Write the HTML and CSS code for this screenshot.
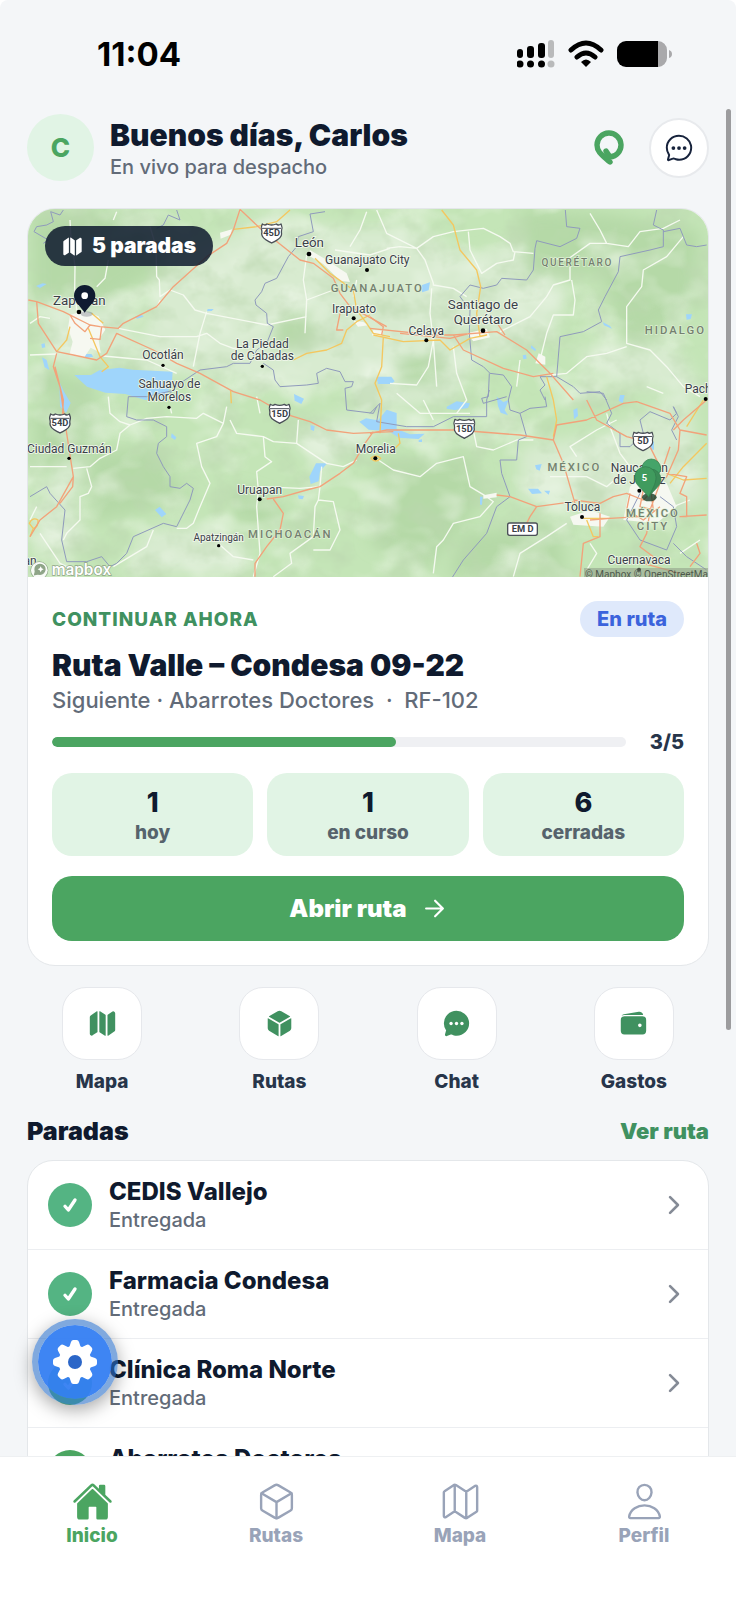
FILE: index.html
```html
<!DOCTYPE html>
<html lang="es">

<head>
    <meta charset="UTF-8">
    <meta name="viewport" content="width=device-width, initial-scale=1.0">
    <title>Inicio</title>
    <link rel="stylesheet" href="styles.css">
</head>

<body>
    <!-- Iconos compartidos -->
    <svg class="sprite" aria-hidden="true">
        <symbol id="i-map" viewBox="0 0 512 512">
            <path d="M48.17 113.34A32 32 0 0032 141.24V438a32 32 0 0047 28.37c.43-.23.85-.47 1.26-.74l84.14-55.05a8 8 0 003.63-6.72V46.45a8 8 0 00-12.51-6.63zM212.36 39.31A8 8 0 00200 46v357.56a8 8 0 003.63 6.72l96 62.42A8 8 0 00312 466V108.67a8 8 0 00-3.64-6.73zM464.53 46.47a31.64 31.64 0 00-31.5-.88 12.07 12.07 0 00-1.25.74l-84.15 55a8 8 0 00-3.63 6.72v357.46a8 8 0 0012.52 6.63l107.07-73.46a32 32 0 0016.41-28v-296a32.76 32.76 0 00-15.47-28.21z"/>
        </symbol>
        <symbol id="i-cube" viewBox="0 0 512 512">
            <path d="M440.9 136.3a4 4 0 000-6.91L288.16 40.65a64.14 64.14 0 00-64.33 0L71.12 129.39a4 4 0 000 6.91L254 243.88a4 4 0 004.06 0zM238 270.81L54 163.48a4 4 0 00-6 3.46v173.92a48 48 0 0023.84 41.39L234 479.48a4 4 0 006-3.46V274.27a4 4 0 00-2-3.46zM272 274.27V476a4 4 0 006 3.46l162.15-97.23A48 48 0 00464 340.86V167a4 4 0 00-6-3.45L274 270.81a4 4 0 00-2 3.46z"/>
        </symbol>
        <symbol id="i-bubble" viewBox="0 0 512 512">
            <path d="M87.48 380c1.2-4.38-1.43-10.47-3.94-14.86a42.63 42.63 0 00-2.54-3.8 199.81 199.81 0 01-33-110C47.64 139.09 140.72 48 255.82 48 356.2 48 440 117.54 459.57 209.85a199 199 0 014.43 41.64c0 112.41-89.49 204.93-204.59 204.93-18.31 0-43-4.6-56.47-8.37s-26.92-8.77-30.39-10.11a31.14 31.14 0 00-11.13-2.07 30.7 30.7 0 00-12.08 2.43L81.5 462.78a15.92 15.92 0 01-4.66 1.22 9.61 9.61 0 01-9.58-9.74 15.85 15.85 0 01.6-3.29z"/>
        </symbol>
        <symbol id="i-wallet" viewBox="0 0 512 512">
            <path d="M95.5 104h320a87.73 87.73 0 0111.18.71 66 66 0 00-77.51-55.56L86 94.08h-.3a66 66 0 00-41.07 26.13A87.57 87.57 0 0195.5 104zM415.5 128h-320a64.07 64.07 0 00-64 64v192a64.07 64.07 0 0064 64h320a64.07 64.07 0 0064-64V192a64.07 64.07 0 00-64-64zM368 320a32 32 0 1132-32 32 32 0 01-32 32z"/>
        </symbol>
        <symbol id="i-check" viewBox="0 0 24 24">
            <path d="M6 13.5l4 4.5 8-12" fill="none" stroke="currentColor" stroke-width="4" stroke-linecap="round" stroke-linejoin="round"/>
        </symbol>
        <symbol id="i-chevron" viewBox="0 0 512 512">
            <path d="M184 112l144 144-144 144" fill="none" stroke="currentColor" stroke-width="48" stroke-linecap="round" stroke-linejoin="round"/>
        </symbol>
        <symbol id="shield" viewBox="0 0 66 66">
            <path d="M5 5q8 6 14 0 14 6 28 0 6 6 14 0l4 12q-4 8-2 18c-1 16-18 20-30 27C21 55 4 51 3 35q2-10-2-18z" fill="#fff" stroke="#4a4f57" stroke-width="4" stroke-linejoin="round"/>
            <path d="M4 18h58" stroke="#4a4f57" stroke-width="3"/>
        </symbol>
    </svg>

    <div class="phone">
        <div class="statusbar">
            <span class="time">11:04</span>
            <div class="status-icons">
                <svg width="38" height="28" viewBox="0 0 38 28">
                    <g>
                        <rect x="0" y="9" width="6" height="9" rx="3"/><rect x="10" y="6" width="7" height="12" rx="3"/><rect x="21" y="3" width="7" height="15" rx="3"/>
                        <circle cx="3" cy="24" r="3.5"/><circle cx="13.5" cy="24" r="3.5"/><circle cx="24.5" cy="24" r="3.5"/>
                    </g>
                    <g fill="#b9babb"><rect x="31" y="0" width="6" height="18" rx="3"/><circle cx="34" cy="24" r="3.5"/></g>
                </svg>
                <svg width="36" height="28" viewBox="0 0 36 28" fill="none" stroke="#000" stroke-width="5" stroke-linecap="round">
                    <path d="M3 10Q18-4 33 10M9 17q9-8 18 0"/>
                    <path d="M18 27l-5-5q5-5 10 0z" fill="#000" stroke="none"/>
                </svg>
                <svg width="56" height="26" viewBox="0 0 56 26">
                    <path d="M9 0H41V26H9A9 9 0 010 17V9A9 9 0 019 0z"/>
                    <path d="M41 0A9 9 0 0150 9V17A9 9 0 0141 26zM52 9q3 1 3 4t-3 4z" fill="#a9a9ab"/>
                </svg>
            </div>
        </div>

        <header class="header">
            <div class="avatar">C</div>
            <div class="greeting">
                <h1>Buenos días, Carlos</h1>
                <p>En vivo para despacho</p>
            </div>
            <svg class="logo" viewBox="0 0 30 36" fill="none" stroke="#4ba561" stroke-width="5.4" stroke-linecap="round" stroke-linejoin="round">
                <path d="M12 21l4 6A12 12 0 1 0 3 15C3 22 8 25 16 32"/>
            </svg>
            <button class="chat-btn" aria-label="Mensajes">
                <svg viewBox="0 0 512 512">
                    <use href="#i-bubble" fill="none" stroke="#17233c" stroke-width="34"/>
                    <g fill="#17233c"><circle cx="160" cy="256" r="32"/><circle cx="256" cy="256" r="32"/><circle cx="352" cy="256" r="32"/></g>
                </svg>
            </button>
        </header>

        <main class="content">
            <section class="card">
                <div class="map">
                    <svg class="map-canvas" viewBox="24 27 2040 1104" preserveAspectRatio="xMidYMid slice">
                        <defs>
                            <filter id="hills" x="0" y="0" width="100%" height="100%">
                                <feTurbulence type="fractalNoise" baseFrequency=".009 .011" numOctaves="4" seed="8"/>
                                <feColorMatrix values="0 0 0 0 .5  0 0 0 0 .68  0 0 0 0 .43  3 0 0 0 -1.4"/>
                                <feComponentTransfer><feFuncA type="linear" slope=".6"/></feComponentTransfer>
                            </filter>
                            <filter id="plains" x="0" y="0" width="100%" height="100%">
                                <feTurbulence type="fractalNoise" baseFrequency=".006 .008" numOctaves="3" seed="21"/>
                                <feColorMatrix values="0 0 0 0 .87  0 0 0 0 .94  0 0 0 0 .83  0 3 0 0 -1.45"/>
                                <feComponentTransfer><feFuncA type="linear" slope=".6"/></feComponentTransfer>
                            </filter>
                            <filter id="soft" x="-20%" y="-20%" width="140%" height="140%"><feGaussianBlur stdDeviation="22"/></filter>
                        </defs>

                        <!-- Terreno -->
                        <rect x="0" y="0" width="2100" height="1150" fill="#c4e5b7"/>
                        <g filter="url(#soft)">
                            <g fill="#d8ebd0">
                                <path d="M420 210l330-170 200 40 240 0 200 120 60 260-200 100-240-40-160 60-240-50-270-20z"/>
                                <path d="M60 290l240 0 60 180-280 10zM1340 180l160-60 150 160-60 140-190 60z"/>
                                <path d="M1500 740l260-40 240-130 60 330-180 60-380-60zM1650 450l300-20 110 150-250-20z"/>
                                <path d="M300 1120l80-130 180-10 120 50 0 90zM800 700l180-60 90 60-160 110z"/>
                                <path d="M30 1050l30-150 110-240 40 60-50 200 60 120zM950 460l260-30 150 50-50 120-300 40z"/>
                            </g>
                            <g fill="#b5d9a7">
                                <path d="M40 40l320-10 120 60-60 120-180 110-200-30zM1500 30l260 10 280 50-20 240-200 110-80-220-220 10z"/>
                                <path d="M40 620l230-10-60 150-160 60zM770 340l120 10-20 90-110 10z"/>
                                <path d="M1070 780l290-10 30 130-170 210-170-80zM640 860l130 40 40 90-170-30zM200 760l200-20 120 160-300 70z"/>
                                <path d="M1330 1000l280-30 30 140-360 20zM1140 470l120-10 20 80-140 20zM40 500l200 60-40 50-160-40z"/>
                            </g>
                        </g>
                        <rect x="24" y="27" width="2040" height="1104" filter="url(#plains)"/>
                        <rect x="24" y="27" width="2040" height="1104" filter="url(#hills)"/>

                        <!-- Agua -->
                        <g fill="#9fd5fb">
                            <path d="M163 525l50 0 25-14 60-8 40 6 120 6-2 30-20 50-60 5-60-18-60-4-55-18z"/>
                            <path d="M66 472l14 8 8 30-14-8zM190 462l24 0 6 8-24 4zM118 545l14 30 20 34-14 30-18-20zM345 350l20-6 6 6-20 6zM563 327h18l-6 6-14 1zM48 258l20-8 12 2-20 12zM64 432l10-2 2 12-10 2z"/>
                            <path d="M455 700l14 12-4 8-12-8zM405 930l14-10 20 22-14 10zM822 582l30 14-8 16-20-10zM872 675l12 4-2 14-10-4zM868 830l20-40 34 0-22 24-4 30-24 8zM834 886l18 2-4 10-12-2z"/>
                            <path d="M1018 665l20-10 36 6 26-32 30 10 0 48 40 16 44-2-18 16-60-4-30-20-60-4z"/>
                            <path d="M1206 255l24-8-4 24-20 6zM1072 530l42 0 10 14-10 8-40 0zM1070 530l14 0-4 14-12 0zM1280 620l30-16 40 6-6 14-40 6-24-4zM1430 590l20 16 16-6-12 30 10 16-22-8-8-20zM1660 630l12-6 2 24-12 10zM1800 585l14 0-6 24-12-6zM1890 725l12 0 0 24-10 0zM1524 866l30 0 12 14-30 2zM1545 796l20-4-6 20-10-4zM1572 872l18 0-4 12zM1380 890l8 0-2 24-6 0zM1743 960l14 0-4 12-10-2zM1998 343l18 0-4 14-12 2zM1534 436l14 12-2 6-14-10zM1508 466l10-2 2 12-10 2zM1748 366l22 12 6 8-24-10zM1196 720l10-2 0 8-10 0z"/>
                        </g>

                        <!-- Zonas urbanas -->
                        <g fill="#f6f8f1">
                            <path d="M150 345l40-12 46 16 20 40-20 30 6 40-30-16-20 30-44-8 10-40-14-40z"/>
                            <path d="M600 98l36-10-4 16-30 12zM870 150l50 30 60 40 10 26-30-4-50-50-46-26zM1340 400l60-14 10 26-50 12zM1060 390l30 2-4 20-30-6zM1830 860l50-50 60 40 30 70-60 50-100-10zM1650 950l60-20 60 20-20 30-90-6zM1556 460l20 10 0 24-30-4zM1000 362l30 4 14 10-30 4zM1390 886l40-8 0 14-40 4z"/>
                        </g>

                        <!-- Caminos secundarios -->
                        <g class="road minor">
                            <path d="M150 60L152 100 165 200 164 270 170 330M290 35L280 60M390 80L408 140 410 230 418 240 420 290 450 270 490 285 525 330 560 340 740 375 860 350M265 180L255 235 230 260M420 300L412 320M295 385L420 410 530 410 560 400 600 430 640 445 690 440M560 335L540 400 520 500M30 370L60 350 90 355M30 465L110 462M250 468L380 480 470 520M1040 35L1020 90 990 140M860 165L850 240 860 300 940 270M860 300L855 400M945 150L1050 165 1110 145M1010 240L1000 290"/>
                            <path d="M1070 30L1100 100 1190 145 1140 140 1100 145M1190 145L1240 110 1300 95 1390 85 1440 110 1470 130 1480 155 1540 160M1345 95L1350 150 1385 220 1430 190 1480 180 1485 155M1190 145L1215 180 1240 250 1240 255 1300 265 1340 290M1235 265L1230 340 1240 420 1225 500 1190 555 1110 550M1710 40L1740 90 1760 130 1825 140 1860 95 1930 85 1980 60M1760 130L1710 130 1640 180 1600 175M1650 200L1650 240 1600 255 1580 290 1530 350 1440 395M1655 240L1665 300 1660 345 1600 345 1580 400 1560 480M1990 110L1940 170 1870 210 1865 260 1820 320 1820 430 1890 450 1940 500 1990 560 2040 590M1820 440L1760 460 1700 470 1640 520 1590 525M1500 480L1490 560M1300 440L1310 520 1340 600 1310 640M1240 420L1250 560"/>
                            <path d="M265 590L270 640 300 665 330 675 380 655 440 650 530 655 550 640 610 670 620 620M330 675L300 700 290 750 240 775 210 800 160 805M30 800L90 800 140 800M200 805L215 860 205 880 180 890 180 960 140 1000 130 1020M60 1000L120 1090 140 1100M30 960L50 920M610 670L590 710 530 730 545 800 570 850 540 920 520 970 500 985 470 985M630 660L650 700 730 710 760 725 830 730 920 790 970 800 1010 780M730 710L735 770 755 785 710 815 715 870 710 920 720 1060 700 1130M720 860L840 865 900 860 905 800M900 860L895 900 885 920 880 1010 810 1060 815 1090 760 1130M895 900L940 905 960 990 930 1050 880 1050M400 990L380 1040 280 1100M600 1035L640 1070 700 1080M835 660L830 730M455 640L450 620M710 590L720 640"/>
                            <path d="M1075 780L1120 810 1200 830 1250 790 1330 770 1350 860 1400 890 1420 905 1380 950 1300 970 1270 1020 1250 1040 1240 1120M1360 690L1370 740 1420 750 1490 720 1540 720M1640 970L1580 1010 1500 1060 1480 1130M1590 830L1700 830 1760 860 1830 800 1800 760 1770 680 1760 640M1670 770L1650 740 1730 690 1790 660M1210 600L1230 640 1240 660M1130 580L1200 640 1260 640 1350 640M1710 1030L1730 1060 1700 1110M2010 900L1960 920 1940 900M1980 1060L2040 1020M1880 560L1930 580"/>
                        </g>

                        <!-- Límites estatales -->
                        <g class="border">
                            <path d="M70 130L85 120 42 95 50 80 80 75 100 65 92 35 120 45 130 30M410 85L430 75 445 45 480 60 470 30M915 35L870 42 880 95 835 110 830 140 805 170 770 235 735 250 725 275 705 300 708 315 740 340 742 370 760 380 740 430 710 450 690 490 640 490 620 500 540 510 510 530 480 550 450 580 400 590M730 490L760 510 765 540 780 560 860 555 895 550 890 520 920 505 960 515 975 545 1000 545 995 560 975 565 980 630 1060 640 1070 620"/>
                            <path d="M1636 30L1640 80 1680 85 1670 115 1620 140 1550 122 1545 145 1540 210 1520 240 1445 235 1430 255 1390 265 1350 255 1320 290 1350 330 1348 400 1355 480 1390 500 1410 520 1450 525 1475 560 1465 600M1910 30L1900 75 1930 90 1930 140 1890 150 1800 170 1795 215 1755 290 1735 330 1745 365 1690 395 1620 410 1610 530 1560 530 1575 555 1560 570 1575 600M1930 95L1980 85 2000 135 2030 140 2060 135M1610 530L1660 560 1680 580 1740 575 1760 600"/>
                            <path d="M465 570L380 590 325 590 320 650 350 660 400 660 440 680 440 710 415 730 410 760 430 800 450 830 450 860 480 865 500 850 520 865 510 900 470 980 430 970 340 1010 320 1060 290 1090 270 1100 245 1070 200 1085 140 1085 125 1020 135 930 90 880 80 860 30 890"/>
                            <path d="M1050 640L1080 610 1070 665 1160 680 1240 680 1300 650 1400 650 1400 600 1408 570M1408 520L1405 590 1385 595 1390 610 1460 590M1465 600L1470 630 1500 640 1520 710 1495 720 1490 780 1440 780 1445 820 1470 890 1430 920 1400 1000 1330 1080 1295 1135M1575 590L1580 620 1530 625 1500 640M1700 575L1750 580 1775 640 1760 670 1800 700 1800 740 1830 740 1870 700 1860 660 1890 635 1950 660 1970 640 1960 620 1975 650 1955 690 1970 720M1860 880L1820 960 1860 1020 1940 1050 1970 980 1960 920 1920 890M1960 1030L2000 1070 2060 1110"/>
                        </g>

                        <!-- Autopistas -->
                        <g class="road yellow">
                            <path d="M640 88L710 80 770 65 810 30M885 175L930 220 1000 270 1010 330 1040 370 1060 400 1110 410M820 480L860 460 920 450 965 430 980 390 1010 365 1050 345M205 385L240 470 265 500 245 515M150 380L140 420 110 455M215 340L250 370M632 572L634 610"/>
                            <path d="M1265 30L1300 75 1320 150 1370 210 1382 260 1370 340 1380 410 1400 405 1350 415 1290 450 1260 420 1150 425 1060 405M1090 410L1085 500 1065 550 1085 600 1080 700M1580 530L1600 600 1610 660 1600 710M1690 955L1770 955M1700 960L1720 1010 1735 1010M2060 730L1990 800 1950 850M2060 835L1990 840 1940 820M2050 600L2000 680M1135 700L1140 730 1110 760M1052 775q16-14 30 0-14 16-30 0"/>
                            <path d="M28 970q10-20 26-10 2 20-14 26zM30 1010L40 985"/>
                        </g>
                        <g class="road">
                            <path d="M660 28L640 90 620 130 560 170 460 260 410 320 310 370 295 385 240 380 210 375 130 335 50 305 25 300M660 28L720 85 790 140 840 180 880 190 940 235 960 280 990 320 1100 380M50 305L55 370 110 455 160 465 230 480 260 460 290 400 400 450 470 490 540 520 640 575 720 600 790 640 870 665 920 690 1000 700 1120 695M150 345L165 370 195 395 210 375M110 460L100 500 120 560 140 700 160 830 110 920 60 960 30 1010M105 500L130 600 125 690M160 830L158 860 120 910M960 340L950 390 970 390M245 380L240 418 210 415"/>
                            <path d="M1050 385L1240 405 1300 405 1430 395 1520 450 1570 500 1590 520 1660 600M1300 405L1330 450 1450 505 1540 530 1600 520M1140 400L1290 415 1350 400M1435 375L1455 405M1050 350L1090 380 1085 405"/>
                            <path d="M1050 700L1100 690 1310 690 1500 705 1600 720 1610 675 1700 660 1810 610 1850 605 1950 640 1980 690 2060 705M1700 600L1730 660 1820 710 1860 720M1600 720L1630 790 1665 910M1660 900L1740 910 1780 890 1820 880 1870 900M1060 695L1035 730 1000 790 960 820 900 860 860 870 790 890 740 897M760 897L790 940 780 990 740 1040 705 1090 705 1130M1430 885L1470 890 1550 920 1660 905M1550 920L1530 950 1520 970M1740 940L1740 1010 1690 1030 1680 1130M1710 960L1770 955 1860 950M1960 690L1990 660 2060 600M1980 690L1975 750 1940 830 1920 850 1890 930 1880 1000 1860 1040 1900 1070 1870 1090 1980 1120M1870 900L1900 870 1920 800 1900 760 1870 700M1940 820L2000 830 1980 880 2000 890 2000 950 1980 950 2060 945M1830 880L1820 930 1870 960 1920 920M2030 1030L2040 1060 2010 1100M1930 800L1950 740M1890 850L1900 930 1860 920 1870 870"/>
                        </g>

                        <!-- Etiquetas -->
                        <g class="city" text-anchor="middle">
                            <g class="big">
                                <text x="178" y="315">Zapopan</text><text x="868" y="142">León</text>
                                <text x="1389" y="327">Santiago de</text><text x="1389" y="371">Querétaro</text>
                            </g>
                            <text x="1042" y="191">Guanajuato City</text><text x="1002" y="338">Irapuato</text>
                            <text x="429" y="478">Ocotlán</text><text x="727" y="443">La Piedad</text><text x="727" y="481">de Cabadas</text>
                            <text x="448" y="565">Sahuayo de</text><text x="448" y="603">Morelos</text>
                            <text x="1219" y="404">Celaya</text><text x="1994" y="578" text-anchor="start">Pachuca</text>
                            <text x="148" y="758">Ciudad Guzmán</text><text x="719" y="881">Uruapan</text>
                            <text class="tiny" x="596" y="1022">Apatzingán</text><text x="1067" y="758">Morelia</text>
                            <text x="1687" y="933">Toluca</text><text x="1857" y="1092">Cuernavaca</text>
                            <text x="1858" y="815">Naucalpan</text><text x="1858" y="853">de Juárez</text>
                            <text x="30" y="1096">an</text>
                        </g>
                        <g class="state" text-anchor="middle">
                            <text x="1072" y="275">GUANAJUATO</text><text x="1672" y="197" class="sm">QUERÉTARO</text>
                            <text x="1966" y="401">HIDALGO</text><text x="811" y="1015">MICHOACÁN</text>
                            <text x="1663" y="812">MÉXICO</text><text x="1899" y="951">MÉXICO</text><text x="1899" y="991">CITY</text>
                        </g>
                        <g>
                            <circle cx="177" cy="336" r="7"/><circle cx="867" cy="162" r="7"/><circle cx="1041" cy="210" r="6"/><circle cx="1001" cy="355" r="6"/><circle cx="429" cy="496" r="5"/><circle cx="727" cy="499" r="5"/><circle cx="447" cy="622" r="5"/><circle cx="1389" cy="392" r="7"/><circle cx="1219" cy="421" r="6"/><circle cx="2057" cy="597" r="6"/><circle cx="147" cy="775" r="5"/><circle cx="719" cy="898" r="6"/><circle cx="596" cy="1037" r="5"/><circle cx="1066" cy="775" r="6"/><circle cx="1686" cy="951" r="6"/><circle cx="1858" cy="872" r="6"/><circle cx="1857" cy="1109" r="6"/>
                        </g>
                        <g class="plate" text-anchor="middle">
                            <use href="#shield" x="722" y="67" width="66" height="66"/><text x="755" y="108">45D</text>
                            <use href="#shield" x="87" y="637" width="66" height="66"/><text x="120" y="679">54D</text>
                            <use href="#shield" x="746" y="608" width="66" height="66"/><text x="779" y="650">15D</text>
                            <use href="#shield" x="1300" y="653" width="66" height="66"/><text x="1333" y="695">15D</text>
                            <use href="#shield" x="1837" y="692" width="64" height="64"/><text x="1869" y="733">5D</text>
                            <rect x="1463" y="969" width="89" height="37" rx="6" fill="#fff" stroke="#4a4f57" stroke-width="4"/><text x="1508" y="997">EM D</text>
                        </g>

                        <!-- Marcadores -->
                        <ellipse cx="200" cy="342" rx="18" ry="8" fill="#4c5566" opacity=".3"/>
                        <path d="M194 338C180 316 162 306 162 287a32 32 0 0164 0c0 19-18 29-32 51z" fill="#0f1b31"/>
                        <circle cx="194" cy="287" r="10" fill="#fff"/>
                        <g>
                            <ellipse cx="1888" cy="892" rx="22" ry="12" fill="#173d28" opacity=".8"/>
                            <g stroke="#317a4b" stroke-width="2">
                                <path d="M1894 872c-14-24-28-22-28-38a28 28 0 0156 0c0 16-14 26-28 38z" transform="translate(0-29)" fill="#45a469"/>
                                <path d="M1889 888c-16-24-28-34-28-50a31 31 0 0162 0c0 20-20 30-34 50z" fill="#3b8c57"/>
                                <path d="M1886 892c-16-24-42-36-42-60a32 32 0 0164 0c0 20-12 36-22 60z" fill="#409b5e"/>
                            </g>
                            <text class="pin-label" x="1873" y="843" text-anchor="middle">5</text>
                        </g>

                        <!-- Marca y atribución -->
                        <g class="brand">
                            <circle cx="58" cy="1111" r="25" fill="#fff" opacity=".9"/>
                            <circle cx="60" cy="1108" r="15" fill="#8fa588"/>
                            <path d="M44 1124l4-18 14 14z" fill="#8fa588"/>
                            <path d="M62 1099l3 6 6 3-6 3-3 6-3-6-6-3 6-3z" fill="#fff"/>
                            <text x="95" y="1124">mapbox</text>
                        </g>
                        <rect x="1692" y="1104" width="380" height="30" fill="#8e9b87" opacity=".55"/>
                        <text class="attrib" x="1695" y="1135">© Mapbox © OpenStreetMap</text>
                    </svg>
                    <div class="stops-badge">
                        <svg viewBox="0 0 512 512"><use href="#i-map"/></svg>
                        5 paradas
                    </div>
                </div>

                <div class="route">
                    <div class="route-top">
                        <span class="eyebrow">CONTINUAR AHORA</span>
                        <span class="status">En ruta</span>
                    </div>
                    <h2>Ruta Valle – Condesa 09-22</h2>
                    <p class="next">Siguiente · Abarrotes Doctores &nbsp;·&nbsp; RF-102</p>
                    <div class="progress-row">
                        <div class="progress"><div class="bar" style="width: 60%"></div></div>
                        <span>3/5</span>
                    </div>
                    <div class="stats">
                        <div class="stat"><strong>1</strong><span>hoy</span></div>
                        <div class="stat"><strong>1</strong><span>en curso</span></div>
                        <div class="stat"><strong>6</strong><span>cerradas</span></div>
                    </div>
                    <button class="open-btn">
                        Abrir ruta
                        <svg viewBox="0 0 512 512" fill="none" stroke="#fff" stroke-width="44" stroke-linecap="round" stroke-linejoin="round"><path d="M268 96l160 160-160 160M420 256H84"/></svg>
                    </button>
                </div>
            </section>

            <nav class="shortcuts">
                <a href="#mapa"><span class="tile"><svg viewBox="0 0 512 512"><use href="#i-map"/></svg></span>Mapa</a>
                <a href="#rutas"><span class="tile"><svg viewBox="0 0 512 512"><use href="#i-cube"/></svg></span>Rutas</a>
                <a href="#chat"><span class="tile"><svg viewBox="0 0 512 512"><use href="#i-bubble" stroke="#409160" stroke-width="30"/><g fill="#fff"><circle cx="160" cy="256" r="30"/><circle cx="256" cy="256" r="30"/><circle cx="352" cy="256" r="30"/></g></svg></span>Chat</a>
                <a href="#gastos"><span class="tile"><svg viewBox="0 0 512 512"><use href="#i-wallet"/></svg></span>Gastos</a>
            </nav>

            <div class="section-head">
                <h2>Paradas</h2>
                <a href="#ruta">Ver ruta</a>
            </div>

            <ul class="stops">
                <li><a href="#p1">
                    <span class="done"><svg><use href="#i-check"/></svg></span>
                    <span class="info"><strong>CEDIS Vallejo</strong><small>Entregada</small></span>
                    <svg class="chevron"><use href="#i-chevron"/></svg>
                </a></li>
                <li><a href="#p2">
                    <span class="done"><svg><use href="#i-check"/></svg></span>
                    <span class="info"><strong>Farmacia Condesa</strong><small>Entregada</small></span>
                    <svg class="chevron"><use href="#i-chevron"/></svg>
                </a></li>
                <li><a href="#p3">
                    <span class="done"><svg><use href="#i-check"/></svg></span>
                    <span class="info"><strong>Clínica Roma Norte</strong><small>Entregada</small></span>
                    <svg class="chevron"><use href="#i-chevron"/></svg>
                </a></li>
                <li><a href="#p4">
                    <span class="done current"></span>
                    <span class="info"><strong>Abarrotes Doctores</strong><small>Siguiente</small></span>
                    <svg class="chevron"><use href="#i-chevron"/></svg>
                </a></li>
            </ul>
        </main>

        <nav class="tabbar">
            <a class="active" href="#inicio">
                <svg viewBox="0 0 512 512" fill="currentColor">
                    <path d="M261.56 101.28a8 8 0 00-11.06 0L66.4 277.15a8 8 0 00-2.47 5.79L63.9 448a32 32 0 0032 32H192a16 16 0 0016-16V328a8 8 0 018-8h80a8 8 0 018 8v136a16 16 0 0016 16h96.06a32 32 0 0032-32V282.94a8 8 0 00-2.47-5.79z"/>
                    <path d="M490.91 244.15l-74.8-71.56V64a16 16 0 00-16-16h-48a16 16 0 00-16 16v32l-57.92-55.38C272.77 35.14 264.71 32 256 32c-8.68 0-16.72 3.14-22.14 8.63l-212.7 203.5c-6.22 6-7 15.87-1.34 22.37A16 16 0 0043 267.56L250.5 69.28a8 8 0 0111.06 0l207.52 198.28a16 16 0 0022.59-.44c6.14-6.36 5.63-16.86-.76-22.97z"/>
                </svg>
                Inicio
            </a>
            <a href="#rutas">
                <svg class="line" viewBox="0 0 512 512">
                    <path d="M448 341.37V170.61A32 32 0 00432.11 143l-152-88.46a47.94 47.94 0 00-48.24 0L79.89 143A32 32 0 0064 170.61v170.76A32 32 0 0079.89 369l152 88.46a48 48 0 0048.24 0l152-88.46A32 32 0 00448 341.37z"/>
                    <path d="M69 153.99l187 110 187-110M256 463.99v-200"/>
                </svg>
                Rutas
            </a>
            <a href="#mapa">
                <svg class="line" viewBox="0 0 512 512">
                    <path d="M313.27 124.64L198.73 51.36a32 32 0 00-29.28.35L56.51 127.49A16 16 0 0048 141.63v295.8a16 16 0 0023.49 14.14l97.82-63.79a32 32 0 0129.5-.24l111.86 73a32 32 0 0029.27-.11l115.43-75.94a16 16 0 008.63-14.2V74.57a16 16 0 00-23.49-14.14l-98 63.86a32 32 0 01-29.24.35zM328 128v336M184 384V48"/>
                </svg>
                Mapa
            </a>
            <a href="#perfil">
                <svg class="line" viewBox="0 0 512 512">
                    <path d="M344 144c-3.92 52.87-44 96-88 96s-84.15-43.12-88-96c-4-55 35-96 88-96s92 42 88 96z"/>
                    <path d="M256 304c-87 0-175.3 48-191.64 138.6C62.39 453.52 68.57 464 80 464h352c11.44 0 17.62-10.48 15.65-21.4C431.3 352 343 304 256 304z"/>
                </svg>
                Perfil
            </a>
        </nav>

        <button class="fab" aria-label="Ajustes">
            <svg viewBox="-22 -22 44 44" fill="#fff">
                <circle r="16.5"/>
                <path id="tooth" d="M-6-14l2-6q.6-2 2.4-2h3.2q1.800 0 2.400 2l2 6V14l-2 6q-.6 2-2.4 2h-3.2q-1.800 0-2.400-2l-2-6z"/>
                <use href="#tooth" transform="rotate(45)"/>
                <use href="#tooth" transform="rotate(90)"/>
                <use href="#tooth" transform="rotate(135)"/>
                <circle r="7" fill="#2b66c8"/>
            </svg>
        </button>
        <div class="scroll-thumb"></div>
    </div>
</body>

</html>
```
FILE: styles.css
```css
* {
    box-sizing: border-box;
    margin: 0;
    padding: 0;
}

body {
    background: #fff;
    font-family: Inter, "Liberation Sans", sans-serif;
    color: #0f1a2e;
}

a {
    color: inherit;
    text-decoration: none;
}

button {
    border: 0;
    font: inherit;
    cursor: pointer;
}

.sprite {
    display: none;
}

.phone {
    position: relative;
    display: flex;
    flex-direction: column;
    height: 100vh;
    overflow: hidden;
    background: #f4f6f8;
    border-radius: 8px 8px 0 0;
}

/* Barra de estado */
.statusbar {
    display: flex;
    justify-content: space-between;
    align-items: center;
    padding: 36px 63px 36px 97px;
}

.time {
    font-size: 33px;
    line-height: 36px;
    font-weight: 700;
    color: #000;
}

.status-icons {
    display: flex;
    align-items: center;
    gap: 13px;
}

/* Encabezado */
.header {
    display: flex;
    align-items: center;
    padding: 6px 27px 27px;
}

.avatar {
    display: flex;
    align-items: center;
    justify-content: center;
    width: 67px;
    height: 67px;
    border-radius: 50%;
    background: #e1f4e5;
    color: #4ba561;
    font-size: 26px;
    font-weight: 800;
}

.greeting {
    flex: 1;
    padding-top: 2px;
    padding-left: 16px;
}

.greeting h1 {
    font-size: 30px;
    line-height: 36px;
    font-weight: 900;
}

.greeting p {
    font-size: 20px;
    line-height: 28px;
    font-weight: 500;
    color: #626b78;
}

.logo {
    width: 30px;
    height: 36px;
    margin-right: 25px;
}

.chat-btn {
    display: flex;
    align-items: center;
    justify-content: center;
    width: 60px;
    height: 60px;
    border: 2px solid #e8eaed;
    border-radius: 50%;
    background: #fff;
}

.chat-btn svg {
    width: 30px;
    height: 30px;
}

.content {
    flex: 1;
    min-height: 0;
    overflow: hidden;
    padding: 0 27px;
}

/* Tarjeta principal */
.card {
    overflow: hidden;
    background: #fff;
    border: 1px solid #e4e7ea;
    border-radius: 28px;
}

.map {
    position: relative;
    height: 368px;
    overflow: hidden;
}

.map-canvas {
    display: block;
    width: 100%;
    height: 100%;
    font-family: Roboto, "Liberation Sans", sans-serif;
}

.road {
    fill: none;
    stroke: #f2a27a;
    stroke-width: 4;
    stroke-linejoin: round;
}

.road.yellow {
    stroke: #f4c75f;
}

.road.minor {
    stroke: #f5faf0;
    stroke-width: 4;
}

.border {
    fill: none;
    stroke: #8f9abc;
    stroke-width: 3;
    stroke-linejoin: round;
}

.city {
    font-size: 36px;
    fill: #3a4048;
    stroke: #f1f8ec;
    stroke-width: 5;
    paint-order: stroke;
}

.city .big {
    font-size: 40px;
}

.city .tiny {
    font-size: 30px;
}

.state {
    font-size: 34px;
    font-weight: 500;
    letter-spacing: 6px;
    fill: #74806f;
    stroke: #dcefd3;
    stroke-width: 4;
    paint-order: stroke;
}

.state .sm {
    font-size: 30px;
    letter-spacing: 5px;
}

.plate {
    font-size: 28px;
    font-weight: 700;
    fill: #3a4048;
}

.pin-label {
    font-size: 28px;
    font-weight: 700;
    fill: #fff;
}

.brand {
    font-family: Inter, sans-serif;
    font-size: 46px;
    font-weight: 600;
    fill: #fff;
    stroke: #8fa588;
    stroke-width: 4;
    paint-order: stroke;
}

.attrib {
    font-size: 30px;
    fill: #4f594d;
}

.stops-badge {
    position: absolute;
    top: 17px;
    left: 17px;
    display: flex;
    align-items: center;
    gap: 9px;
    padding: 0 17px;
    border-radius: 20px;
    background: rgba(15, 27, 46, .86);
    color: #fff;
    font-size: 21px;
    line-height: 40px;
    font-weight: 900;
}

.stops-badge svg {
    width: 21px;
    height: 21px;
    fill: #fff;
}

.route {
    padding: 24px;
}

.route-top {
    display: flex;
    align-items: center;
    justify-content: space-between;
}

.eyebrow {
    color: #409160;
    font-size: 19px;
    font-weight: 800;
    letter-spacing: 1px;
}

.status {
    padding: 0 17px;
    border-radius: 18px;
    background: #dfe9fb;
    color: #3b63dc;
    font-size: 20px;
    line-height: 36px;
    font-weight: 800;
}

.route h2 {
    margin-top: 10px;
    font-size: 30px;
    line-height: 36px;
    font-weight: 900;
}

.next {
    color: #626b78;
    font-size: 22px;
    line-height: 34px;
    font-weight: 500;
}

.progress-row {
    display: flex;
    align-items: center;
    gap: 24px;
    margin-top: 11px;
    color: #27354a;
    font-size: 20px;
    line-height: 28px;
    font-weight: 800;
}

.progress {
    flex: 1;
    height: 10px;
    border-radius: 5px;
    background: #eff0f3;
    overflow: hidden;
}

.bar {
    height: 100%;
    border-radius: 5px;
    background: #4ba561;
}

.stats {
    display: grid;
    grid-template-columns: repeat(3, 1fr);
    gap: 14px;
    margin-top: 17px;
}

.stat {
    display: flex;
    flex-direction: column;
    align-items: center;
    padding: 14px 0 10px;
    border-radius: 20px;
    background: #e1f4e5;
}

.stat strong {
    font-size: 27px;
    line-height: 32px;
    font-weight: 800;
}

.stat span {
    color: #56636c;
    font-size: 19px;
    line-height: 27px;
    font-weight: 800;
}

.open-btn {
    display: flex;
    align-items: center;
    justify-content: center;
    gap: 15px;
    width: 100%;
    height: 65px;
    margin-top: 20px;
    border-radius: 20px;
    background: #4ba561;
    color: #fff;
    font-size: 24px;
    font-weight: 900;
}

.open-btn svg {
    width: 25px;
    height: 25px;
}

/* Accesos rápidos */
.shortcuts {
    display: grid;
    grid-template-columns: repeat(4, 1fr);
    gap: 27px;
    margin-top: 21px;
}

.shortcuts a {
    display: flex;
    flex-direction: column;
    align-items: center;
    gap: 8px;
    color: #27354a;
    font-size: 19px;
    line-height: 28px;
    font-weight: 800;
}

.tile {
    display: flex;
    align-items: center;
    justify-content: center;
    width: 80px;
    height: 73px;
    border: 1px solid #e6e8ec;
    border-radius: 24px;
    background: #fff;
}

.tile svg {
    width: 29px;
    height: 29px;
    fill: #409160;
}

.section-head {
    display: flex;
    align-items: center;
    justify-content: space-between;
    margin: 18px 0 12px;
    line-height: 34px;
}

.section-head h2 {
    font-size: 25px;
    font-weight: 900;
}

.section-head a {
    color: #409160;
    font-size: 22px;
    font-weight: 900;
}

/* Lista de paradas */
.stops {
    list-style: none;
    background: #fff;
    border: 1px solid #e4e7ea;
    border-radius: 26px;
}

.stops li + li {
    border-top: 1px solid #eceef1;
}

.stops a {
    display: flex;
    align-items: center;
    padding: 16px 20px;
}

.done {
    display: flex;
    align-items: center;
    justify-content: center;
    width: 44px;
    height: 44px;
    border-radius: 50%;
    background: #54b483;
    color: #fff;
}

.done.current {
    background: #4ba561;
}

.done svg {
    width: 20px;
    height: 20px;
}

.info {
    display: flex;
    flex: 1;
    flex-direction: column;
    padding-left: 17px;
}

.info strong {
    font-size: 24px;
    line-height: 30px;
    font-weight: 800;
}

.info small {
    color: #626b78;
    font-size: 20px;
    line-height: 26px;
    font-weight: 500;
}

.chevron {
    width: 28px;
    height: 28px;
    color: #858b96;
}

/* Navegación inferior */
.tabbar {
    display: grid;
    grid-template-columns: repeat(4, 1fr);
    height: 144px;
    padding-top: 24px;
    background: #fff;
    border-top: 1px solid #eef0f2;
}

.tabbar a {
    display: flex;
    flex-direction: column;
    align-items: center;
    color: #99a3b8;
    font-size: 19px;
    line-height: 28px;
    font-weight: 800;
}

.tabbar a.active {
    color: #4ba561;
}

.tabbar svg {
    width: 41px;
    height: 41px;
}

.line {
    fill: none;
    stroke: currentColor;
    stroke-width: 30;
    stroke-linejoin: round;
    stroke-linecap: round;
}

.fab {
    position: absolute;
    left: 32px;
    bottom: 195px;
    display: flex;
    align-items: center;
    justify-content: center;
    width: 86px;
    height: 86px;
    border: 6px solid rgba(43, 112, 200, .6);
    border-radius: 50%;
    background: rgba(50, 125, 242, .94);
    background-clip: padding-box;
    box-shadow: 0 5px 18px rgba(0, 0, 0, .35);
}

.fab svg {
    width: 44px;
    height: 44px;
}

.scroll-thumb {
    position: absolute;
    top: 109px;
    right: 5px;
    width: 5px;
    height: 921px;
    border-radius: 3px;
    background: #9c9c9e;
}
```
